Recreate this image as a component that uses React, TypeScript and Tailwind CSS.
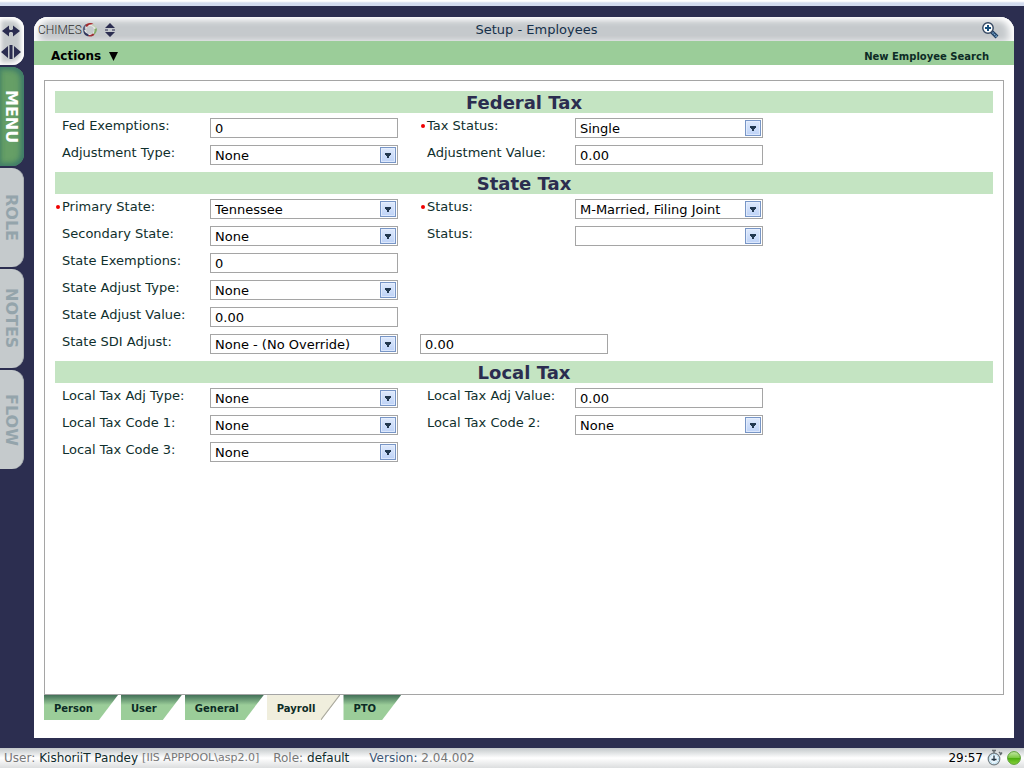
import { type ReactNode } from "react";

const controlClass =
  "h-5 w-full appearance-none rounded-none border border-[#a5a5a5] bg-white px-1 pb-0 text-[13px] leading-4 text-black outline-none focus:border-[#5f7fb5]";

function Label({ id, text, required }: { id: string; text: string; required?: boolean }) {
  return (
    <label htmlFor={id} className="flex h-4 items-center leading-4 text-[#0f2f2d]">
      <span className="flex w-[7px] shrink-0 items-center justify-start" aria-hidden="true">
        {required && <span className="ml-px size-1 rounded-full bg-[#f00000]" />}
      </span>
      {text}
    </label>
  );
}

function TextBox({ id, value, label }: { id: string; value: string; label?: string }) {
  return (
    <div className="w-[188px]">
      <input id={id} type="text" defaultValue={value} aria-label={label} className={controlClass + " pt-0"} />
    </div>
  );
}

function DropDown({ id, value }: { id: string; value: string }) {
  return (
    <div className="relative w-[188px]">
      <select id={id} defaultValue={value} className={controlClass + " pt-0.5"}>
        <option value={value}>{value}</option>
      </select>
      <svg viewBox="0 0 16 16" className="pointer-events-none absolute top-0.5 right-0.5 size-4" aria-hidden="true">
        <defs>
          <linearGradient id={`${id}-fill`} x1="0" y1="0" x2="0" y2="1">
            <stop offset="0" stopColor="#dfeafc" />
            <stop offset="1" stopColor="#bdd2f7" />
          </linearGradient>
        </defs>
        <rect x="0.5" y="0.5" width="15" height="15" fill={`url(#${id}-fill)`} stroke="#7896c6" />
        <path d="M1.5 14.5V1.5H14.5V14.5Z" fill="none" stroke="#e9f1fe" strokeOpacity="0.7" />
        <path d="M5 6h6v2h-1v1H9v2H7V9H6V8H5z" fill="#22384f" />
      </svg>
    </div>
  );
}

function Section({ title, children }: { title: string; children: ReactNode }) {
  return (
    <section>
      <h2 className="h-[22px] bg-[#c4e4c2] text-center text-lg leading-6 font-bold text-[#2b2d50]">{title}</h2>
      <div className="grid auto-rows-[27px] grid-cols-[155px_210px_155px_188px] items-start pt-[5px]">{children}</div>
    </section>
  );
}

function RailTab({ text, active }: { text: string; active?: boolean }) {
  return (
    <button
      type="button"
      className={
        "flex h-[99px] w-6 items-center justify-center rounded-r-xl text-base font-bold [writing-mode:vertical-rl] " +
        (active
          ? "bg-[#669f66] pr-0.5 text-white shadow-[inset_-3px_0_6px_#3d7a6a,inset_0_3px_5px_#4b8767,inset_0_-3px_5px_#4b8767]"
          : "border-r border-[#aab0b3] bg-[#c5cacc] pr-px text-[#94a4ab]")
      }
    >
      {text}
    </button>
  );
}

function BottomTab({ text, active }: { text: string; active?: boolean }) {
  return (
    <button
      type="button"
      role="tab"
      aria-selected={!!active}
      className={
        "relative h-[25px] pt-0.5 pr-[25px] pl-2.5 text-left text-[10px] font-bold text-[#0c2b25] [clip-path:polygon(0_0,100%_0,calc(100%-19px)_100%,0_100%)] " +
        (active ? "bg-[#f0eedd]" : "bg-linear-to-b from-[#437158] to-[#9bcd99] to-40%")
      }
    >
      {text}
      {active && (
        <svg viewBox="0 0 19 25" className="absolute top-0 right-0 h-[25px] w-[19px]" aria-hidden="true">
          <path d="M19 0L0 25" stroke="#aaa99f" strokeWidth="1.5" />
        </svg>
      )}
    </button>
  );
}

function SwirlLogo() {
  return (
    <svg viewBox="0 0 16 16" className="size-4 shrink-0" fill="none" aria-hidden="true">
      <circle cx="8" cy="8" r="5.2" stroke="#e6e8e6" strokeWidth="2.6" />
      <path d="M2.6 3.6C5 .4 9.400 .2 12 2.4C9 2 6.600 2.600 5 5Z" fill="#a42a2d" />
      <path d="M11 2C14 3.200 15.600 6 14.600 8.800C14 6 12.600 4.400 10 3.700Z" fill="#c3cfba" />
      <path d="M14.800 6.200C15.400 10 12.900 13 9.800 13.800C11.800 11.800 12.900 10 12.400 7Z" fill="#82aa68" />
      <path d="M12.600 12.400C10 15.400 6.200 15 4.200 12.400C6.800 13.600 8.800 13.200 10.600 11.400Z" fill="#9d3038" />
      <path d="M6.400 14.500C2.700 13.700 .5 10.500 1.600 6.800C2.300 9.600 3.600 11.200 6.500 12.200Z" fill="#30375e" />
      <path d="M1 8.500C.4 5.300 2.300 2.800 4.400 2.200C3 4.200 3 6 3.500 8Z" fill="#5b617e" />
    </svg>
  );
}

function Rail() {
  return (
    <nav aria-label="Panels" className="flex w-[34px] shrink-0 flex-col gap-0.5">
      <div className="flex h-12 w-6 flex-col items-center justify-between rounded-r-xl bg-[#c6cacc] pt-1.5 pr-0.5 pb-[5px] shadow-[inset_-3px_0_5px_#fff,inset_0_3px_5px_#fff,inset_0_-3px_5px_#eee]">
        <button type="button" aria-label="Widen panel">
          <svg viewBox="0 0 20 16" className="h-4 w-5" fill="#2b2d50">
            <path d="M1 8L8 2.500V6.500H12V2.500L19 8L12 13.500V9.500H8V13.500Z" />
            <path d="M9 5h2v2H9zM9 9h2v2H9z" fill="#c6cacc" />
          </svg>
        </button>
        <button type="button" aria-label="Split panel">
          <svg viewBox="0 0 20 16" className="h-4 w-5" fill="#2b2d50">
            <path d="M0 8L7 2V14ZM20 8L13 2V14ZM8.500 1H11.500V15H8.500Z" />
          </svg>
        </button>
      </div>
      <RailTab text="MENU" active />
      <RailTab text="ROLE" />
      <RailTab text="NOTES" />
      <RailTab text="FLOW" />
    </nav>
  );
}

function TitleBar() {
  return (
    <header className="flex h-6 items-center rounded-t-[14px] bg-[#c5c9cc] pt-0.5 pl-1 shadow-[inset_8px_0_9px_-3px_#fff,inset_-8px_0_9px_-3px_#fff,inset_0_6px_7px_-3px_#fff]">
      <div className="flex w-[78px] shrink-0 items-center">
        <span className="w-11 font-[Roboto,sans-serif] text-xs font-light text-[#303030]">CHIMES</span>
        <SwirlLogo />
        <button type="button" aria-label="Expand or collapse" className="ml-1.5 shrink-0">
          <svg viewBox="0 0 12 14" className="h-3.5 w-3" fill="#2b2d50">
            <path d="M6 0L11 5H1ZM6 14L1 9H11ZM1 6.500H4V7.500H1ZM8 6.500H11V7.500H8Z" />
          </svg>
        </button>
      </div>
      <h1 className="flex-1 text-center text-[13px] text-[#15304a]">Setup - Employees</h1>
      <div className="flex w-[57px] shrink-0 justify-end pr-[15px]">
        <button type="button" aria-label="Zoom in">
          <svg viewBox="0 0 18 18" className="size-[18px]" fill="none">
            <path d="M10.800 10.800L16 16" stroke="#1f3f63" strokeWidth="4" />
            <path d="M11.500 11.500L15.600 15.600" stroke="#7fadd2" strokeWidth="1.600" strokeDasharray="1.4 .8" />
            <circle cx="7" cy="7" r="5.200" fill="#fff" stroke="#344761" strokeWidth="1.400" />
            <path d="M7 4V10M4 7H10" stroke="#164f7d" strokeWidth="2" />
          </svg>
        </button>
      </div>
    </header>
  );
}

function StatusBar() {
  return (
    <footer className="flex h-5 items-center bg-linear-to-b from-[#c3c8ca] via-white to-[#dcdedf] pr-[3px] pl-1 text-xs whitespace-nowrap text-[#777]">
      <span>User:</span>
      <span className="ml-1 text-[#102c2c]">KishoriiT Pandey</span>
      <span className="ml-1 text-[11px]">[IIS APPPOOL\asp2.0]</span>
      <span className="ml-3.5">Role:</span>
      <span className="ml-1 text-[#102c2c]">default</span>
      <span className="ml-5">
        <span className="text-[#3f5876]">Version:</span> 2.04.002
      </span>
      <span className="ml-auto text-black">29:57</span>
      <svg viewBox="0 0 16 18" className="ml-1 h-[18px] w-4" fill="none" aria-hidden="true">
        <path d="M5 1.500H9M7 1.500V4M12 3L14.500 5.500M15 3.500L13 6" stroke="#626a6e" strokeWidth="1.500" />
        <circle cx="7" cy="10" r="5.800" fill="#e8f5fc" stroke="#737e84" strokeWidth="1.200" />
        <circle cx="7" cy="10" r="4.500" stroke="#8fc9e7" strokeDasharray="1 1.2" />
        <path d="M7 6.500V12M4.500 10.500H9.500" stroke="#223240" strokeWidth="1.300" />
      </svg>
      <svg viewBox="0 0 14 14" className="ml-1 size-3.5" aria-hidden="true">
        <defs>
          <linearGradient id="online" x1="0" y1="0" x2="0" y2="1">
            <stop offset="0" stopColor="#c6e8a9" />
            <stop offset="0.5" stopColor="#79c83e" />
            <stop offset="0.52" stopColor="#4cae10" />
            <stop offset="1" stopColor="#88d23a" />
          </linearGradient>
        </defs>
        <circle cx="7" cy="7" r="6.400" fill="url(#online)" stroke="#5b9e35" />
      </svg>
    </footer>
  );
}

export default function App() {
  return (
    <div className="flex min-h-screen flex-col bg-[#2c2e50] font-['DejaVu_Sans',Verdana,sans-serif] text-[13px]">
      <div className="h-1.5 bg-linear-to-b from-white from-20% to-[#d3dcef] to-50%" />
      <div className="flex flex-1 pt-[11px] pr-2.5 pb-2.5">
        <Rail />
        <div className="flex min-w-0 flex-1 flex-col rounded-t-[14px] bg-white">
          <TitleBar />
          <div className="flex h-6 items-center justify-between bg-[#9bcd99] pt-1.5 pr-[25px] pl-[17px] font-bold">
            <button type="button" className="flex items-center gap-2 text-xs text-black">
              Actions
              <svg viewBox="0 0 9 9" className="size-[9px]" aria-hidden="true">
                <path d="M0 0H9L4.500 9Z" />
              </svg>
            </button>
            <a href="#new-employee-search" className="text-[10px] text-[#0c2b25]">
              New Employee Search
            </a>
          </div>
          <main className="flex flex-1 flex-col px-2.5 pt-[15px] pb-[18px]">
            <form className="flex-1 border border-[#a5a5a5] p-2.5">
              <Section title="Federal Tax">
                <Label id="fed-exemptions" text="Fed Exemptions:" />
                <TextBox id="fed-exemptions" value="0" />
                <Label id="tax-status" text="Tax Status:" required />
                <DropDown id="tax-status" value="Single" />
                <Label id="adj-type" text="Adjustment Type:" />
                <DropDown id="adj-type" value="None" />
                <Label id="adj-value" text="Adjustment Value:" />
                <TextBox id="adj-value" value="0.00" />
              </Section>
              <Section title="State Tax">
                <Label id="primary-state" text="Primary State:" required />
                <DropDown id="primary-state" value="Tennessee" />
                <Label id="primary-status" text="Status:" required />
                <DropDown id="primary-status" value="M-Married, Filing Joint" />
                <Label id="secondary-state" text="Secondary State:" />
                <DropDown id="secondary-state" value="None" />
                <Label id="secondary-status" text="Status:" />
                <DropDown id="secondary-status" value="" />
                <Label id="state-exemptions" text="State Exemptions:" />
                <div className="col-span-3">
                  <TextBox id="state-exemptions" value="0" />
                </div>
                <Label id="state-adj-type" text="State Adjust Type:" />
                <div className="col-span-3">
                  <DropDown id="state-adj-type" value="None" />
                </div>
                <Label id="state-adj-value" text="State Adjust Value:" />
                <div className="col-span-3">
                  <TextBox id="state-adj-value" value="0.00" />
                </div>
                <Label id="state-sdi" text="State SDI Adjust:" />
                <DropDown id="state-sdi" value="None - (No Override)" />
                <div className="col-span-2">
                  <TextBox id="state-sdi-value" value="0.00" label="State SDI adjust value" />
                </div>
              </Section>
              <Section title="Local Tax">
                <Label id="local-adj-type" text="Local Tax Adj Type:" />
                <DropDown id="local-adj-type" value="None" />
                <Label id="local-adj-value" text="Local Tax Adj Value:" />
                <TextBox id="local-adj-value" value="0.00" />
                <Label id="local-code-1" text="Local Tax Code 1:" />
                <DropDown id="local-code-1" value="None" />
                <Label id="local-code-2" text="Local Tax Code 2:" />
                <DropDown id="local-code-2" value="None" />
                <Label id="local-code-3" text="Local Tax Code 3:" />
                <DropDown id="local-code-3" value="None" />
              </Section>
            </form>
            <div role="tablist" className="flex gap-[3px]">
              <BottomTab text="Person" />
              <BottomTab text="User" />
              <BottomTab text="General" />
              <BottomTab text="Payroll" active />
              <BottomTab text="PTO" />
            </div>
          </main>
        </div>
      </div>
      <StatusBar />
    </div>
  );
}
